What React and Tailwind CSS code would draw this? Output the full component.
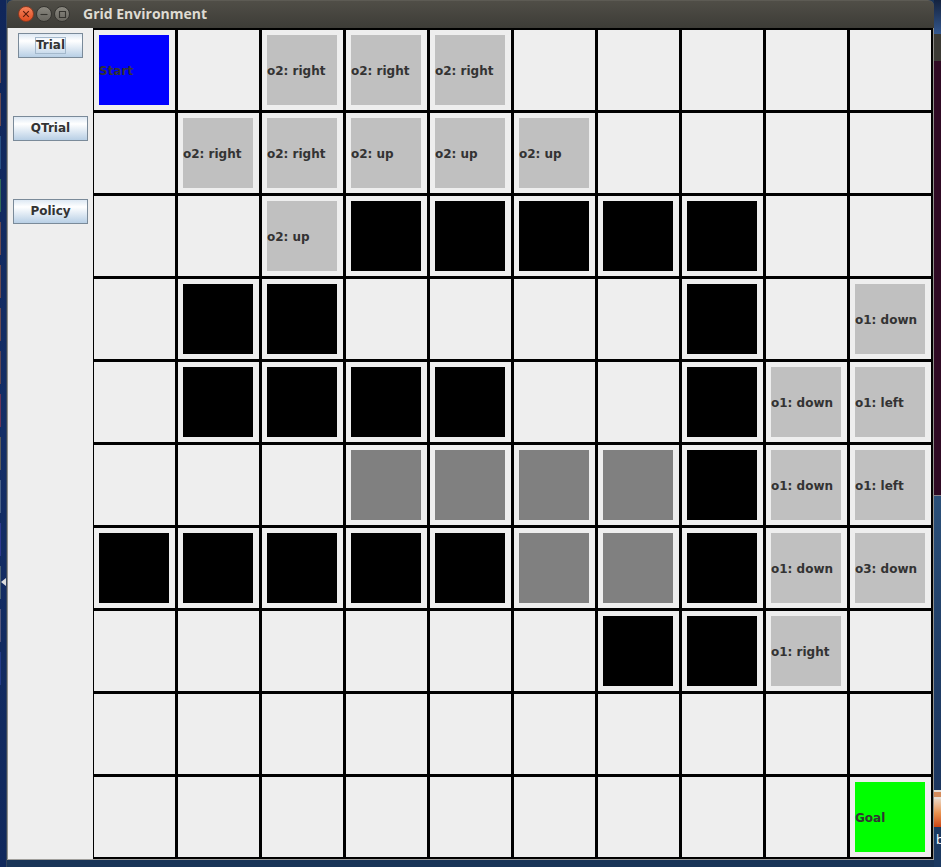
import React from "react";

const FILLS = {
  S: "bg-[#0000ff]",
  G: "bg-[#00ff00]",
  B: "bg-black",
  D: "bg-[#808080]",
  L: "bg-[#c0c0c0]",
};

const wall = { kind: "B", text: "" };
const mud = { kind: "D", text: "" };
const step = (text) => ({ kind: "L", text });
const none = null;

const ROWS = [
  [{ kind: "S", text: "Start" }, none, step("o2: right"), step("o2: right"), step("o2: right"), none, none, none, none, none],
  [none, step("o2: right"), step("o2: right"), step("o2: up"), step("o2: up"), step("o2: up"), none, none, none, none],
  [none, none, step("o2: up"), wall, wall, wall, wall, wall, none, none],
  [none, wall, wall, none, none, none, none, wall, none, step("o1: down")],
  [none, wall, wall, wall, wall, none, none, wall, step("o1: down"), step("o1: left")],
  [none, none, none, mud, mud, mud, mud, wall, step("o1: down"), step("o1: left")],
  [wall, wall, wall, wall, wall, mud, mud, wall, step("o1: down"), step("o3: down")],
  [none, none, none, none, none, none, wall, wall, step("o1: right"), none],
  [none, none, none, none, none, none, none, none, none, none],
  [none, none, none, none, none, none, none, none, none, { kind: "G", text: "Goal" }],
];

const LAUNCHER = [
  "bg-[#6a4a50]", "bg-[#6a4a50]", "bg-[#2a5286]", "bg-[#2f6a58]", "bg-[#6a4a50]",
  "bg-[#6a4a50]", "bg-[#6a4a50]", "bg-[#5f4653]", "bg-[#6a3458]", "bg-[#5c5b5a]",
  "bg-[#4a6288]", "bg-[#2f3a90]", "bg-[#4c6274]", "bg-[#55587c]", "bg-[#243c88]",
];

function Cell({ cell }) {
  return (
    <div className="h-20 bg-[#eeeeee] pt-[5px] pl-[5px]">
      {cell && (
        <div className={`flex h-[70px] w-[70px] items-center pt-[2px] whitespace-nowrap ${FILLS[cell.kind]}`}>
          {cell.text}
        </div>
      )}
    </div>
  );
}

function MetalButton({ children, focused }) {
  return (
    <button
      type="button"
      className={`flex h-[25px] items-center justify-center border border-[#7a8a99] bg-linear-to-b from-[#dde8f3] via-white via-30% to-[#b8cfe5] font-bold ${focused ? "w-[65px]" : "w-[75px]"}`}
    >
      <span className={focused ? "border border-[#a3b8cc] leading-[15px]" : "leading-[15px]"}>{children}</span>
    </button>
  );
}

function TitleButton({ label, close, children }) {
  return (
    <button
      type="button"
      aria-label={label}
      className={`flex h-4 w-4 items-center justify-center rounded-full border ${
        close
          ? "border-[#8d3a20] bg-linear-to-b from-[#f5825a] to-[#df4b1c] text-[#5a1d0c]"
          : "border-[#353430] bg-linear-to-b from-[#8a8880] to-[#68665f] text-[#35342f]"
      }`}
    >
      <svg viewBox="0 0 14 14" className="h-[14px] w-[14px] shrink-0" fill="none" stroke="currentColor" strokeWidth="1.1">
        {children}
      </svg>
    </button>
  );
}

export default function App() {
  return (
    <div className="flex min-h-screen bg-[#13294f] font-['DejaVu_Sans',sans-serif] text-[12px] font-bold text-[#333333]">
      <aside className="relative w-[7px] shrink-0 border-r border-[#33435c] bg-linear-to-b from-[#10265a] via-[#142e66] to-[#10285c]">
        <div className="flex flex-col gap-[10px] pt-[50px]">
          {LAUNCHER.map((c, i) => (
            <div key={i} className={`h-[33px] w-px ${c}`} />
          ))}
        </div>
        <svg viewBox="0 0 5 8" className="absolute top-[578px] left-px h-2 w-[5px]" fill="#dddddd">
          <path d="M5 0V8L0 4Z" />
        </svg>
      </aside>

      <div className="flex min-w-0 flex-1 flex-col bg-[#1a3558]">
        <main className="border-b border-[#a09f9c]">
          <header className="flex h-7 items-center rounded-t-md border-t border-[#5d5b54] bg-linear-to-b from-[#504e47] to-[#3d3c37] pb-[2px] pl-[11px]">
            <div className="flex gap-[2px]">
              <TitleButton label="Close" close>
                <path d="M4.2 4.2L9.8 9.8M9.8 4.2L4.2 9.8" />
              </TitleButton>
              <TitleButton label="Minimize">
                <path d="M3.5 7.5H10.5" />
              </TitleButton>
              <TitleButton label="Maximize">
                <path d="M4.5 4.5H10.5V10.5H4.5Z" />
              </TitleButton>
            </div>
            <h1 className="ml-[13px] font-['Open_Sans',sans-serif] text-[14px] leading-5 font-bold text-[#dfdbd2]">
              Grid Environment
            </h1>
          </header>
          <div className="flex border-x border-[#8f8e8a] bg-[#eeeeee]">
            <nav className="flex w-[85px] shrink-0 flex-col items-center gap-[58px] pt-[5px]">
              <MetalButton focused>Trial</MetalButton>
              <MetalButton>QTrial</MetalButton>
              <MetalButton>Policy</MetalButton>
            </nav>
            <section className="grid flex-1 grid-cols-10 gap-[3px] bg-black py-[2px] pr-[2px] pl-px">
              {ROWS.flatMap((row, r) => row.map((cell, c) => <Cell key={`${r}-${c}`} cell={cell} />))}
            </section>
          </div>
        </main>
      </div>

      <aside className="flex w-[7px] shrink-0 flex-col overflow-hidden bg-[#1b3961]">
        <div className="h-[34px] bg-linear-to-b from-[#14233f] to-[#34588f]" />
        <div className="h-[27px] bg-[#3b3a35]" />
        <div className="h-[435px] border-b border-[#8a8288] bg-[#300a24]" />
        <div className="h-[294px] bg-linear-to-b from-[#2b5079] via-[#213f68] to-[#1c365f]" />
        <div className="h-[9px] border-y-2 border-[#e6ddd5] bg-[#d58c5c]" />
        <div className="h-7 bg-linear-to-b from-[#e9d5c2] via-[#e8924f] to-[#cc4310]" />
        <div className="mt-1 pl-[2px] font-['Open_Sans',sans-serif] text-[13px] leading-4 font-normal text-white">b</div>
      </aside>
    </div>
  );
}
